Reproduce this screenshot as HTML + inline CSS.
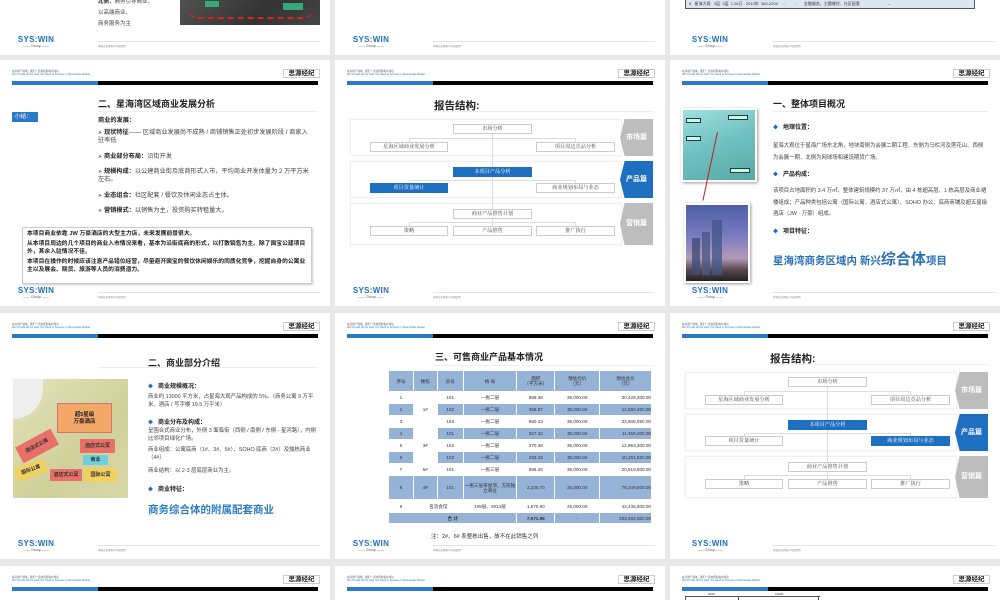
<!DOCTYPE html>
<html><head><meta charset="utf-8">
<style>
*{margin:0;padding:0;box-sizing:border-box}
html{width:1000px;height:600px;overflow:hidden}
body{width:1000px;height:600px;overflow:hidden;background:#e8e8e8;position:relative;font-family:"Liberation Sans","Noto Sans CJK SC",sans-serif;color:#333}
.s{position:absolute;width:330px;height:246px;background:#fff;overflow:hidden}
.s>div{position:absolute}
.ht{left:12px;top:10px;font-size:2.6px;line-height:3.2px;color:#555;white-space:nowrap}
.ht b{color:#2a7ac8;font-weight:normal}
.lg{left:283px;top:9px;width:37px;height:9px;border:1px solid #ccc;font-size:6.5px;font-weight:bold;line-height:8px;text-align:center;color:#222}
.bar{left:12px;top:21px;width:306px;height:4px;background:#000}
.bar i{position:absolute;left:0;top:0;width:86px;height:4px;background:#2a7ac8}
.fl{left:16px;top:227px;width:40px;text-align:center}
.fl .w{display:block;font-size:8px;font-weight:900;color:#1f6fbf;letter-spacing:0.3px;line-height:8px;font-family:"Liberation Sans",sans-serif}
.fl .g{display:block;font-size:3.5px;color:#555;line-height:4px}
.fline{left:98px;top:232px;width:222px;height:1px;background:#e4e4e4}
.ftx{left:98px;top:235px;font-size:2.5px;color:#888}
.ti{font-size:9px;font-weight:bold;color:#222;white-space:nowrap}
.tl{height:1px;background:#eee}
.t6{font-size:6.2px;line-height:8px;color:#444}
.t6 b{color:#222}
.bx{border:1px solid #ccc;background:#fff;font-size:5.2px;color:#444;text-align:center;line-height:8px;font-family:"Liberation Serif","Noto Serif CJK SC",serif}
.bx.bl{background:#1f6fc0;color:#fff;border-color:#1f6fc0}
.band{background:#fff;border:1px solid #f0f0f0;box-shadow:0 0 1px #e4e4e4}
.tab{width:33px;color:#fff;font-size:7px;font-weight:bold;text-align:center;clip-path:polygon(14% 0,100% 0,100% 100%,14% 100%,0 50%)}
.dg{font-size:6px;font-weight:bold;color:#222}
.dg:before{content:"◆";color:#1f6fbf;margin-right:5px;font-size:5px}
table{border-collapse:collapse;font-size:4.6px;color:#333;text-align:center}
td{border:1px solid #fff;padding:0;line-height:5px}
tr.b td{background:#95b3d7}
td.w{background:#fff!important}
.ar{color:#2a7ac8;font-size:5px}
</style></head><body>

<!-- Row1 col1 -->
<div class="s" style="left:0;top:-191px">
<div class="t6" style="left:98px;top:188px;line-height:11px;font-size:5.5px"><b>北侧：</b>商务引导商业，<br>以高端商业、<br>商务服务为主</div>
<div style="left:180px;top:180px;width:140px;height:36px;background:linear-gradient(135deg,#555,#333 60%,#444);"></div>
<div style="left:188px;top:200px;width:125px;height:10px;border-bottom:2px dashed #d22;border-radius:0 0 60px 60px"></div>
<div style="left:205px;top:192px;width:14px;height:6px;background:#3a7"></div>
<div style="left:283px;top:194px;width:20px;height:7px;background:#3a7"></div>
<div class="fl"><span class="w">SYS:WIN</span><span class="g">—— Group ——</span></div>
<div class="fline"></div><div class="ftx">本报告仅供客户内部使用</div>
</div>

<!-- Row1 col2 -->
<div class="s" style="left:335px;top:-191px">
<div class="fl"><span class="w">SYS:WIN</span><span class="g">—— Group ——</span></div>
<div class="fline"></div><div class="ftx">本报告仅供客户内部使用</div>
</div>

<!-- Row1 col3 -->
<div class="s" style="left:670px;top:-191px">
<div style="left:15px;top:190px;width:290px;height:10px;background:#dce6f2;border:1px solid #555;font-size:4px;line-height:8px;white-space:nowrap;padding-left:3px">6 &nbsp; 星海大观 &nbsp; 3层 &nbsp;3层 &nbsp;1.26万 &nbsp; 2010年 &nbsp;360-2200 &nbsp; &nbsp; - &nbsp; &nbsp; &nbsp; &nbsp; - &nbsp; &nbsp; &nbsp; 金融服务、主题餐饮、社区配套 &nbsp; &nbsp; &nbsp; &nbsp; &nbsp; &nbsp; &nbsp; &nbsp; &nbsp; &nbsp; &nbsp; &nbsp; --</div>
<div class="fl" style="left:20px"><span class="w">SYS:WIN</span><span class="g">—— Group ——</span></div>
<div class="fline" style="left:103px"></div><div class="ftx" style="left:103px">本报告仅供客户内部使用</div>
</div>

<!-- Row2 col1 -->
<div class="s" style="left:0;top:60px">
<div class="ht">在房地产领域，我们一直在帮助客户成功<br><b>We Provide All the Help You Need to Success in Real Estate Market</b></div>
<div class="lg">思源经纪</div><div class="bar"><i></i></div>
<div class="ti" style="left:98px;top:37px">二、星海湾区域商业发展分析</div>
<div class="tl" style="left:98px;top:51px;width:220px"></div>
<div style="left:12px;top:52px;width:26px;height:10px;background:#2a7ac8;color:#fff;font-size:5.5px;line-height:10px;padding-left:3px">小结：</div>
<div class="t6" style="left:98px;top:57px"><b>商业的发展：</b></div>
<div class="t6" style="left:98px;top:69px;width:212px"><span class="ar">➤</span> <b>现状特征</b>—— 区域商业发展尚不成熟 / 商铺销售正处初步发展阶段 / 商家入驻率低</div>
<div class="t6" style="left:98px;top:93px;width:212px"><span class="ar">➤</span> <b>商业部分布局：</b>沿街开发</div>
<div class="t6" style="left:98px;top:108px;width:212px"><span class="ar">➤</span> <b>规模构成：</b>以公建商业街及底商形式入市，平均商业开发体量为 2 万平方米左右。</div>
<div class="t6" style="left:98px;top:132px;width:212px"><span class="ar">➤</span> <b>业态组合：</b>社区配套 / 餐饮及休闲业态占主体。</div>
<div class="t6" style="left:98px;top:147px;width:212px"><span class="ar">➤</span> <b>营销模式：</b>以销售为主，投资购买转租量大。</div>
<div style="left:22px;top:167px;width:290px;height:57px;border:1px solid #ccc;box-shadow:1px 1px 2px #ccc;padding:2px 4px;font-size:5.8px;line-height:8px;font-weight:bold;color:#222">本项目商业依靠 JW 万豪酒店的大型主力店，未来发展前景很大。<br><span style="display:block;height:2px"></span>从本项目周边的几个项目的商业入市情况来看，基本为沿街底商的形式，以打散销售为主。除了国宝公建项目外，其余入驻情况不佳。<span style="display:block;height:2px"></span>本项目在操作的时候应该注意产品错位经营，尽量避开国宝的餐饮休闲娱乐的同质化竞争，挖掘自身的公寓业主以及展会、期货、旅游等人员的消费潜力。</div>
<div class="fl"><span class="w">SYS:WIN</span><span class="g">—— Group ——</span></div>
<div class="fline"></div><div class="ftx">本报告仅供客户内部使用</div>
</div>

<!-- Row2 col2 diagram -->
<div class="s" style="left:335px;top:60px">
<div class="ht">在房地产领域，我们一直在帮助客户成功<br><b>We Provide All the Help You Need to Success in Real Estate Market</b></div>
<div class="lg">思源经纪</div><div class="bar"><i></i></div>
<div class="ti" style="left:99px;top:38px;font-size:10.5px">报告结构:</div>
<div class="tl" style="left:98px;top:51px;width:220px"></div>
<div class="band" style="left:15px;top:59px;width:272px;height:37px"></div>
<div class="band" style="left:15px;top:101px;width:272px;height:37px"></div>
<div class="band" style="left:15px;top:143px;width:272px;height:42px"></div>
<div class="tab" style="left:285px;top:59px;height:37px;line-height:37px;background:#bdbdbd">市场篇</div>
<div class="tab" style="left:285px;top:101px;height:37px;line-height:37px;background:#1f6fc0">产品篇</div>
<div class="tab" style="left:285px;top:143px;height:42px;line-height:42px;background:#bdbdbd">营销篇</div>
<div style="left:157px;top:74px;width:1px;height:100px;background:#ddd"></div>
<div style="left:74px;top:78px;width:167px;height:4px;border:1px solid #ddd;border-bottom:0"></div>
<div style="left:74px;top:120px;width:167px;height:4px;border:1px solid #ddd;border-bottom:0"></div>
<div style="left:74px;top:162px;width:167px;height:4px;border:1px solid #ddd;border-bottom:0"></div>
<div class="bx" style="left:118px;top:64px;width:79px;height:10px">市场分析</div>
<div class="bx" style="left:35px;top:82px;width:78px;height:10px">星海区域商业发展分析</div>
<div class="bx" style="left:201px;top:82px;width:79px;height:10px">项目周边竞品分析</div>
<div class="bx bl" style="left:118px;top:107px;width:79px;height:10px">本项目产品分析</div>
<div class="bx bl" style="left:35px;top:123px;width:78px;height:10px">项目货量统计</div>
<div class="bx" style="left:201px;top:123px;width:79px;height:10px">商业规划布局与业态</div>
<div class="bx" style="left:118px;top:149px;width:79px;height:10px">商业产品推售计划</div>
<div class="bx" style="left:35px;top:166px;width:78px;height:10px">策略</div>
<div class="bx" style="left:118px;top:166px;width:79px;height:10px">产品推售</div>
<div class="bx" style="left:201px;top:166px;width:79px;height:10px">推广执行</div>
<div class="fl"><span class="w">SYS:WIN</span><span class="g">—— Group ——</span></div>
<div class="fline"></div><div class="ftx">本报告仅供客户内部使用</div>
</div>

<!-- Row2 col3 -->
<div class="s" style="left:670px;top:60px">
<div class="ht">在房地产领域，我们一直在帮助客户成功<br><b>We Provide All the Help You Need to Success in Real Estate Market</b></div>
<div class="lg">思源经纪</div><div class="bar"><i></i></div>
<div class="ti" style="left:103px;top:37px">一、整体项目概况</div>
<div class="tl" style="left:103px;top:51px;width:215px"></div>
<div style="left:11px;top:48px;width:76px;height:74px;background:#fff;box-shadow:1px 1px 3px #999;padding:2px"><span style="display:block;width:100%;height:100%;background:linear-gradient(160deg,#9fe0e0,#6fc0c0 50%,#5aa8a8);"></span></div>
<div style="left:16px;top:58px;width:15px;height:5px;border:1px solid #333;background:#bfe"></div>
<div style="left:58px;top:55px;width:20px;height:5px;border:1px solid #333;background:#bfe"></div>
<div style="left:16px;top:76px;width:15px;height:5px;border:1px solid #333;background:#bfe"></div>
<div style="left:60px;top:108px;width:20px;height:5px;border:1px solid #333;background:#bfe"></div>
<div style="left:47px;top:72px;width:1px;height:70px;background:#b22;transform:rotate(12deg);transform-origin:top"></div>
<div style="left:14px;top:143px;width:66px;height:80px;background:#fff;box-shadow:1px 1px 3px #999;padding:2px"><span style="display:block;width:100%;height:100%;background:linear-gradient(180deg,#4c5fa8,#7a7ac0 40%,#b29ab8 70%,#5a4a50 85%,#222);"></span></div>
<div style="left:42px;top:160px;width:10px;height:55px;background:#44588a;opacity:.8"></div>
<div style="left:22px;top:178px;width:8px;height:37px;background:#3e4e7a;opacity:.8"></div>
<div style="left:32px;top:172px;width:8px;height:43px;background:#4a5a86;opacity:.8"></div>
<div class="dg" style="left:103px;top:62px">地理位置：</div>
<div class="t6" style="left:103px;top:80px;width:215px;line-height:12px;font-size:5.4px">星海大观位于星海广场东北角，地块南侧为会展二期工程、东侧为马栏河及莲花山、西侧为会展一期、北侧为网球场和建设期货广场。</div>
<div class="dg" style="left:103px;top:109px">产品构成：</div>
<div class="t6" style="left:103px;top:126px;width:215px;line-height:11.5px;font-size:5.4px">该项目占地面积约 3.4 万㎡，整体建筑规模约 37 万㎡，由 4 栋超高层、1 栋高层及商业裙楼组成；产品种类包括公寓（国际公寓、酒店式公寓）、SOHO 办公、底商商铺及超五星级酒店（JW · 万豪）组成。</div>
<div class="dg" style="left:103px;top:166px">项目特征：</div>
<div style="left:103px;top:188px;white-space:nowrap;color:#2a6fb8;font-weight:bold;font-size:10.5px">星海湾商务区域内 新兴<span style="font-size:15px">综合体</span>项目</div>
<div class="fl" style="left:20px"><span class="w">SYS:WIN</span><span class="g">—— Group ——</span></div>
<div class="fline" style="left:103px"></div><div class="ftx" style="left:103px">本报告仅供客户内部使用</div>
</div>

<!-- Row3 col1 -->
<div class="s" style="left:0;top:313px">
<div class="ht">在房地产领域，我们一直在帮助客户成功<br><b>We Provide All the Help You Need to Success in Real Estate Market</b></div>
<div class="lg">思源经纪</div><div class="bar"><i></i></div>
<div class="ti" style="left:148px;top:43px">二、商业部分介绍</div>
<div class="tl" style="left:98px;top:54px;width:220px"></div>
<div style="left:13px;top:66px;width:115px;height:119px;background:linear-gradient(135deg,#e4e4bc,#cfd09a 60%,#d8d8a8)"></div>
<div style="left:13px;top:66px;width:30px;height:40px;background:#eee;border-radius:0 0 40px 0"></div>
<div style="left:57px;top:90px;width:55px;height:30px;background:#f4a868;border:1px solid #c77;font-size:5.5px;font-weight:bold;text-align:center;line-height:7px;padding-top:8px;color:#222">超5星级<br>万豪酒店</div>
<div style="left:17px;top:124px;width:40px;height:18px;background:#e87068;transform:rotate(-28deg);font-size:5px;font-weight:bold;line-height:18px;text-align:center">酒店式公寓</div>
<div style="left:80px;top:126px;width:35px;height:14px;background:#e87068;font-size:5px;font-weight:bold;line-height:14px;text-align:center">酒店式公寓</div>
<div style="left:83px;top:142px;width:25px;height:10px;background:#6cd0e0;font-size:5px;font-weight:bold;line-height:10px;text-align:center">商业</div>
<div style="left:15px;top:150px;width:32px;height:14px;background:#f0d060;transform:rotate(-20deg);font-size:5px;font-weight:bold;line-height:14px;text-align:center">国际公寓</div>
<div style="left:50px;top:156px;width:32px;height:12px;background:#e87068;font-size:5px;font-weight:bold;line-height:12px;text-align:center">酒店式公寓</div>
<div style="left:84px;top:155px;width:33px;height:14px;background:#f0d060;font-size:5px;font-weight:bold;line-height:14px;text-align:center">国际公寓</div>
<div class="dg" style="left:148px;top:68px">商业规模概况：</div>
<div class="t6" style="left:148px;top:80px;width:170px;font-size:5.4px;line-height:8px">商业约 13000 平方米，占星海大观产品构成的 5%。（商务公寓 9 万平米、酒店 / 写字楼 19.5 万平米）</div>
<div class="dg" style="left:148px;top:104px">商业分布及构成：</div>
<div class="t6" style="left:148px;top:114px;width:170px;font-size:5.4px;line-height:8px">呈围合式商业分布，外侧 3 面临街（西侧 / 南侧 / 东侧 - 星河路），内侧比邻项目绿化广场。</div>
<div class="t6" style="left:148px;top:133px;width:170px;font-size:5.4px;line-height:8px">商业组成：公寓底商（1#、3#、5#）、SOHO 底商（2#）及独栋商业（4#）</div>
<div class="t6" style="left:148px;top:154px;width:170px;font-size:5.4px">商业结构：以 2-3 层底层商业为主。</div>
<div class="dg" style="left:148px;top:171px">商业特征：</div>
<div style="left:148px;top:189px;white-space:nowrap;color:#2e7cc0;font-weight:bold;font-size:10.5px">商务综合体的附属配套商业</div>
<div class="fl"><span class="w">SYS:WIN</span><span class="g">—— Group ——</span></div>
<div class="fline"></div><div class="ftx">本报告仅供客户内部使用</div>
</div>

<!-- Row3 col2 table -->
<div class="s" style="left:335px;top:313px">
<div class="ht">在房地产领域，我们一直在帮助客户成功<br><b>We Provide All the Help You Need to Success in Real Estate Market</b></div>
<div class="lg">思源经纪</div><div class="bar"><i></i></div>
<div class="ti" style="left:100px;top:37px">三、可售商业产品基本情况</div>
<div class="tl" style="left:98px;top:52px;width:220px"></div>
<div style="left:53px;top:57px">
<table style="width:264px">
<colgroup><col style="width:25px"><col style="width:24px"><col style="width:26px"><col style="width:54px"><col style="width:38px"><col style="width:45px"><col style="width:52px"></colgroup>
<tr class="b" style="height:21px"><td>序号</td><td>楼栋</td><td>房号</td><td>格 局</td><td>面积<br>（平方米）</td><td>预估均价<br>（元）</td><td>预估总价<br>（元）</td></tr>
<tr style="height:12px"><td>1</td><td rowspan="3" class="w">1#</td><td>101</td><td>一拖二层</td><td>869.38</td><td>35,000.00</td><td style="text-align:right">30,428,300.00</td></tr>
<tr class="b" style="height:12px"><td>2</td><td>102</td><td>一拖二层</td><td>358.87</td><td>35,000.00</td><td style="text-align:right">12,560,450.00</td></tr>
<tr style="height:12px"><td>3</td><td>103</td><td>一拖二层</td><td>960.23</td><td>35,000.00</td><td style="text-align:right">33,608,050.00</td></tr>
<tr class="b" style="height:12px"><td>4</td><td rowspan="3" class="w">3#</td><td>101</td><td>一拖二层</td><td>327.32</td><td>35,000.00</td><td style="text-align:right">11,456,200.00</td></tr>
<tr style="height:12px"><td>5</td><td>102</td><td>一拖二层</td><td>370.38</td><td>35,000.00</td><td style="text-align:right">12,963,300.00</td></tr>
<tr class="b" style="height:12px"><td>6</td><td>103</td><td>一拖二层</td><td>293.19</td><td>35,000.00</td><td style="text-align:right">10,261,650.00</td></tr>
<tr style="height:12px"><td>7</td><td>5#</td><td>101</td><td>一拖三层</td><td>586.28</td><td>35,000.00</td><td style="text-align:right">20,519,800.00</td></tr>
<tr class="b" style="height:24px"><td>8</td><td>4#</td><td>101</td><td>一拖三层带屋顶，方形独立商业</td><td>2,235.70</td><td>35,000.00</td><td style="text-align:right">78,249,500.00</td></tr>
<tr style="height:13px"><td>9</td><td colspan="2">名流会馆</td><td>1#8层、3#14层</td><td>1,670.60</td><td>26,000.00</td><td style="text-align:right">43,435,600.00</td></tr>
<tr class="b" style="height:11px"><td colspan="4"><b>合 计</b></td><td><b>7,671.95</b></td><td>-</td><td style="text-align:right">253,482,850.00</td></tr>
</table></div>
<div style="left:96px;top:219px;font-size:5.5px;color:#333;white-space:nowrap">注：2#、6# 系整栋出售，故不在此销售之列</div>
<div class="fl"><span class="w">SYS:WIN</span><span class="g">—— Group ——</span></div>
<div class="fline"></div><div class="ftx">本报告仅供客户内部使用</div>
</div>

<!-- Row3 col3 diagram -->
<div class="s" style="left:670px;top:313px">
<div class="ht">在房地产领域，我们一直在帮助客户成功<br><b>We Provide All the Help You Need to Success in Real Estate Market</b></div>
<div class="lg">思源经纪</div><div class="bar"><i></i></div>
<div class="ti" style="left:100px;top:38px;font-size:10.5px">报告结构:</div>
<div class="tl" style="left:98px;top:51px;width:220px"></div>
<div class="band" style="left:15px;top:59px;width:272px;height:37px"></div>
<div class="band" style="left:15px;top:101px;width:272px;height:37px"></div>
<div class="band" style="left:15px;top:143px;width:272px;height:42px"></div>
<div class="tab" style="left:285px;top:59px;height:37px;line-height:37px;background:#bdbdbd">市场篇</div>
<div class="tab" style="left:285px;top:101px;height:37px;line-height:37px;background:#1f6fc0">产品篇</div>
<div class="tab" style="left:285px;top:143px;height:42px;line-height:42px;background:#bdbdbd">营销篇</div>
<div style="left:157px;top:74px;width:1px;height:100px;background:#ddd"></div>
<div style="left:74px;top:78px;width:167px;height:4px;border:1px solid #ddd;border-bottom:0"></div>
<div style="left:74px;top:120px;width:167px;height:4px;border:1px solid #ddd;border-bottom:0"></div>
<div style="left:74px;top:162px;width:167px;height:4px;border:1px solid #ddd;border-bottom:0"></div>
<div class="bx" style="left:118px;top:64px;width:79px;height:10px">市场分析</div>
<div class="bx" style="left:35px;top:82px;width:78px;height:10px">星海区域商业发展分析</div>
<div class="bx" style="left:201px;top:82px;width:79px;height:10px">项目周边竞品分析</div>
<div class="bx bl" style="left:118px;top:107px;width:79px;height:10px">本项目产品分析</div>
<div class="bx" style="left:35px;top:123px;width:78px;height:10px">项目货量统计</div>
<div class="bx bl" style="left:201px;top:123px;width:79px;height:10px">商业规划布局与业态</div>
<div class="bx" style="left:118px;top:149px;width:79px;height:10px">商业产品推售计划</div>
<div class="bx" style="left:35px;top:166px;width:78px;height:10px">策略</div>
<div class="bx" style="left:118px;top:166px;width:79px;height:10px">产品推售</div>
<div class="bx" style="left:201px;top:166px;width:79px;height:10px">推广执行</div>
<div class="fl" style="left:20px"><span class="w">SYS:WIN</span><span class="g">—— Group ——</span></div>
<div class="fline" style="left:103px"></div><div class="ftx" style="left:103px">本报告仅供客户内部使用</div>
</div>

<!-- Row4 -->
<div class="s" style="left:0;top:566px;height:34px">
<div class="ht">在房地产领域，我们一直在帮助客户成功<br><b>We Provide All the Help You Need to Success in Real Estate Market</b></div>
<div class="lg">思源经纪</div><div class="bar"><i></i></div>
</div>
<div class="s" style="left:335px;top:566px;height:34px">
<div class="ht">在房地产领域，我们一直在帮助客户成功<br><b>We Provide All the Help You Need to Success in Real Estate Market</b></div>
<div class="lg">思源经纪</div><div class="bar"><i></i></div>
</div>
<div class="s" style="left:670px;top:566px;height:34px">
<div class="ht">在房地产领域，我们一直在帮助客户成功<br><b>We Provide All the Help You Need to Success in Real Estate Market</b></div>
<div class="lg">思源经纪</div><div class="bar"><i></i></div>
<div style="left:15px;top:30px;width:135px;height:1px;background:#555"></div>
<div style="left:15px;top:30px;width:1px;height:10px;background:#555"></div>
<div style="left:68px;top:30px;width:1px;height:10px;background:#555"></div>
<div style="left:148px;top:30px;width:1px;height:10px;background:#555"></div>
<div style="left:38px;top:26px;font-size:3px">9000</div>
<div style="left:105px;top:26px;font-size:3px">16600</div>
</div>

</body></html>
